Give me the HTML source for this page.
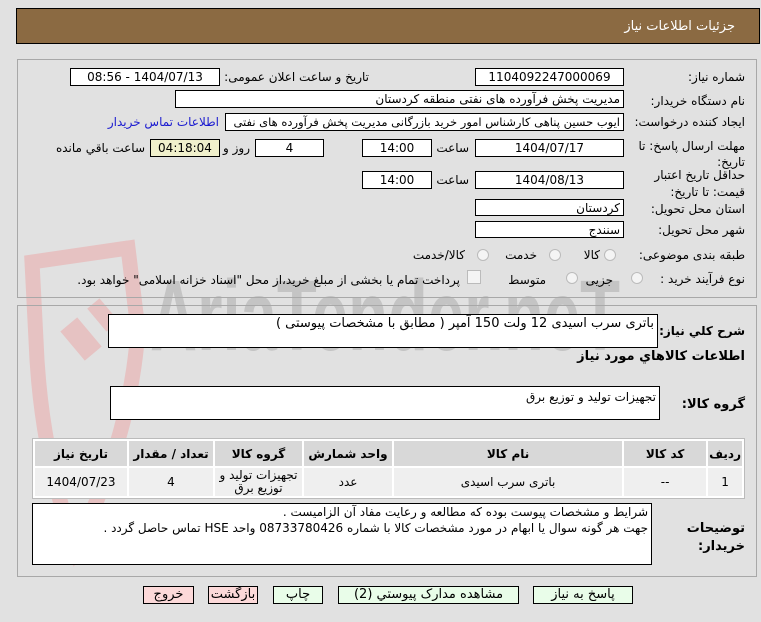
<!DOCTYPE html>
<html><head><meta charset="utf-8"><style>
body{margin:0;width:761px;height:622px;background:#e1e1e1;position:relative;overflow:hidden;font-family:"DejaVu Sans","Liberation Sans",sans-serif;font-size:12px;color:#000}
.a{position:absolute}
.t{position:absolute;direction:rtl;white-space:nowrap;text-align:right}
.b{position:absolute;background:#fff;border:1px solid #000;box-sizing:border-box;text-align:center;line-height:16px;direction:rtl;white-space:nowrap;overflow:hidden}
.r{text-align:right;padding-right:3px}
.p{position:absolute;border:1px solid #a8a8a8;box-sizing:border-box}
.rad{position:absolute;width:12px;height:12px;border-radius:50%;border:1px solid #bbb;background:#f4f4f4;box-sizing:border-box}
table{border-collapse:separate;border-spacing:2px;background:#fff}
td{background:#efefef;text-align:center;direction:rtl;font-size:12px}
th{background:#d8d8d8;font-weight:bold;font-size:12px;height:23px}
.btn{position:absolute;top:586px;height:18px;border:1px solid #000;box-sizing:border-box;text-align:center;line-height:16px;font-size:13px;direction:rtl}
</style></head><body>
<div class="a" style="left:16px;top:8px;width:744px;height:36px;background:#8b6a42;border:1px solid #000;box-sizing:border-box"></div>
<div class="t" style="right:26px;top:19px;color:#fff;font-size:13px">جزئیات اطلاعات نیاز</div>

<svg class="a" style="left:0;top:0" width="761" height="622" viewBox="0 0 761 622">
<path d="M32 262 L128 248 L138 330 Q130 440 75 548 Q40 450 36 340 Z" fill="none" stroke="#e6c2c2" stroke-width="15"/>
<rect x="70" y="320" width="22" height="38" fill="#e6c2c2" transform="rotate(-40 81 339)"/>
<rect x="95" y="300" width="16" height="30" fill="#e6c2c2" transform="rotate(-40 103 315)"/>
<text x="150" y="350" textLength="470" lengthAdjust="spacingAndGlyphs" font-family="Liberation Sans" font-weight="bold" font-size="100" fill="#c4c4c4">AriaTender.neT</text>
</svg>

<div class="p" style="left:17px;top:59px;width:740px;height:239px"></div>
<div class="t" style="right:16px;top:70px">شماره نیاز:</div>
<div class="b" style="left:475px;top:68px;width:149px;height:18px">1104092247000069</div>
<div class="t" style="right:392px;top:70px">تاریخ و ساعت اعلان عمومی:</div>
<div class="b" style="left:70px;top:68px;width:150px;height:18px">1404/07/13 - 08:56</div>

<div class="t" style="right:16px;top:94px">نام دستگاه خریدار:</div>
<div class="b r" style="left:175px;top:90px;width:449px;height:18px">مدیریت پخش فرآورده های نفتی منطقه کردستان</div>

<div class="t" style="right:16px;top:115px">ایجاد کننده درخواست:</div>
<div class="b r" style="left:225px;top:113px;width:399px;height:18px;font-size:11.5px">ایوب حسین پناهی کارشناس امور خرید بازرگانی مدیریت پخش فرآورده های نفتی</div>
<div class="t" style="right:542px;top:115px;color:#1a1ad0">اطلاعات تماس خریدار</div>

<div class="t" style="right:16px;top:138px;line-height:16px">مهلت ارسال پاسخ: تا<br>تاریخ:</div>
<div class="b" style="left:475px;top:139px;width:149px;height:18px">1404/07/17</div>
<div class="t" style="right:292px;top:141px">ساعت</div>
<div class="b" style="left:362px;top:139px;width:70px;height:18px">14:00</div>
<div class="b" style="left:255px;top:139px;width:69px;height:18px">4</div>
<div class="t" style="right:511px;top:141px">روز و</div>
<div class="b" style="left:150px;top:139px;width:70px;height:18px;background:#f0f0cc">04:18:04</div>
<div class="t" style="right:616px;top:141px">ساعت باقي مانده</div>

<div class="t" style="right:16px;top:167px;line-height:17px">حداقل تاریخ اعتبار<br>قیمت: تا تاریخ:</div>
<div class="b" style="left:475px;top:171px;width:149px;height:18px">1404/08/13</div>
<div class="t" style="right:292px;top:173px">ساعت</div>
<div class="b" style="left:362px;top:171px;width:70px;height:18px">14:00</div>

<div class="t" style="right:16px;top:202px">استان محل تحویل:</div>
<div class="b r" style="left:475px;top:199px;width:149px;height:17px">کردستان</div>
<div class="t" style="right:16px;top:223px">شهر محل تحویل:</div>
<div class="b r" style="left:475px;top:221px;width:149px;height:17px">سنندج</div>

<div class="t" style="right:16px;top:248px">طبقه بندی موضوعی:</div>
<div class="rad" style="left:604px;top:249px"></div><div class="t" style="right:161px;top:248px">كالا</div>
<div class="rad" style="left:549px;top:249px"></div><div class="t" style="right:224px;top:248px">خدمت</div>
<div class="rad" style="left:477px;top:249px"></div><div class="t" style="right:296px;top:248px">كالا/خدمت</div>

<div class="t" style="right:16px;top:272px">نوع فرآیند خرید :</div>
<div class="rad" style="left:631px;top:272px"></div><div class="t" style="right:148px;top:273px">جزیی</div>
<div class="rad" style="left:566px;top:272px"></div><div class="t" style="right:215px;top:273px">متوسط</div>
<div class="a" style="left:467px;top:270px;width:12px;height:12px;border:1px solid #bbb;background:#f4f4f4"></div>
<div class="t" style="right:301px;top:273px">پرداخت تمام یا بخشی از مبلغ خرید،از محل "اسناد خزانه اسلامی" خواهد بود.</div>

<div class="p" style="left:17px;top:305px;width:740px;height:272px"></div>
<div class="b r" style="left:108px;top:314px;width:550px;height:34px;text-align:right;line-height:18px;font-size:13px">باتری سرب اسیدی 12 ولت 150 آمپر ( مطابق با مشخصات پیوستی )</div>
<div class="t" style="right:16px;top:324px;font-weight:bold;font-size:12px">شرح كلي نياز:</div>
<div class="t" style="right:16px;top:349px;font-weight:bold;font-size:13px">اطلاعات كالاهاي مورد نياز</div>
<div class="t" style="right:16px;top:397px;font-weight:bold;font-size:13px">گروه كالا:</div>
<div class="b r" style="left:110px;top:386px;width:550px;height:34px;text-align:right;line-height:20px;font-size:12px">تجهیزات تولید و توزیع برق</div>

<table class="a" style="left:32px;top:438px;width:713px;border:1px solid #bbb;background:#fff">
<tr><th style="width:90px">تاريخ نياز</th><th style="width:82px">تعداد / مقدار</th><th style="width:85px">گروه كالا</th><th style="width:86px">واحد شمارش</th><th>نام كالا</th><th style="width:80px">كد كالا</th><th style="width:26px">رديف</th></tr>
<tr style="height:28px"><td>1404/07/23</td><td>4</td><td style="line-height:13px">تجهیزات تولید و<br>توزیع برق</td><td>عدد</td><td>باتری سرب اسیدی</td><td>--</td><td>1</td></tr>
</table>

<div class="t" style="right:16px;top:520px;font-weight:bold;font-size:13px;line-height:18px">توضيحات<br>خريدار:</div>
<div class="b" style="left:32px;top:503px;width:620px;height:62px;text-align:right;padding-right:3px;line-height:16px;font-size:12px;white-space:normal">شرایط و مشخصات پیوست بوده که مطالعه و رعایت مفاد آن الزامیست .<br>جهت هر گونه سوال یا ابهام در مورد مشخصات کالا با شماره 08733780426 واحد HSE تماس حاصل گردد .</div>

<div class="btn" style="left:143px;width:51px;background:#fcd9d9">خروج</div>
<div class="btn" style="left:208px;width:50px;background:#fcd9d9">بازگشت</div>
<div class="btn" style="left:273px;width:50px;background:#e9fde9">چاپ</div>
<div class="btn" style="left:338px;width:181px;background:#e9fde9">مشاهده مدارک پیوستي (2)</div>
<div class="btn" style="left:533px;width:100px;background:#e9fde9">پاسخ به نیاز</div>
</body></html>
